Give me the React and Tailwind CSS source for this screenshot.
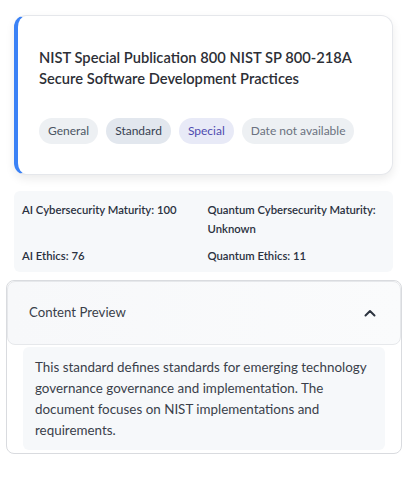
import React from "react";

function Badge({ children, cls }) {
  return (
    <span className={`inline-flex h-[26px] items-center rounded-full px-[9px] text-[12px] ${cls}`}>
      {children}
    </span>
  );
}

export default function App() {
  return (
    <div className="h-[479px] w-[416px] bg-white px-[6px] pt-[15px] font-[Lato,sans-serif]">
      <div className="ml-[8px] w-[379px] rounded-[12px] border border-[#e5e7eb] border-l-[4px] border-l-[#3b82f6] bg-white pb-[30px] pl-[21px] pr-[20px] pt-[31px] shadow-[0_4px_10px_rgba(0,0,0,0.08)]">
        <h2 className="text-[14.7px] font-semibold leading-[21px] text-[#2d2f36]">
          NIST Special Publication 800 NIST SP 800-218A Secure Software Development Practices
        </h2>
        <div className="mt-[29px] flex gap-2">
          <Badge cls="bg-[#edf0f3] text-[#4b5563]">General</Badge>
          <Badge cls="bg-[#e2e7ee] text-[#374151]">Standard</Badge>
          <Badge cls="bg-[#e8eaf7] text-[#4f4bb0]">Special</Badge>
          <Badge cls="bg-[#edf0f3] text-[#6b7280]">Date not available</Badge>
        </div>
      </div>

      <div className="ml-[8px] mt-[16px] grid w-[379px] grid-cols-2 gap-2 rounded-[6px] bg-[#f6f8fa] px-2 pb-[7px] pt-[9px] text-[11.3px] font-semibold leading-[19px] text-[#2a3140]">
        <div>AI Cybersecurity Maturity: 100</div>
        <div>Quantum Cybersecurity Maturity: Unknown</div>
        <div>AI Ethics: 76</div>
        <div>Quantum Ethics: 11</div>
      </div>

      <div className="mt-[8px] w-[396px] rounded-[8px] border border-[#d9dbdf] pb-[3px]">
        <div className="flex h-[64px] items-center justify-between rounded-[8px] border border-[#e6e8eb] bg-gradient-to-r from-[#f7f8fa] to-[#fafbfc] pl-[21px] pr-[24px]">
          <span className="text-[13.2px] text-[#3a3f4a]">Content Preview</span>
          <svg width="12" height="8" viewBox="0 0 12 8" fill="none">
            <path d="M1.5 6.5 L6 2 L10.5 6.5" stroke="#2d3440" strokeWidth="2" strokeLinecap="round" strokeLinejoin="round" />
          </svg>
        </div>
        <div className="mx-4 mt-[2px] rounded-[6px] bg-[#f6f8fa] px-[12px] pb-[9px] pt-[10px] text-[13.4px] leading-[21px] text-[#3a3f4a]">
          This standard defines standards for emerging technology governance governance and implementation. The document focuses on NIST implementations and requirements.
        </div>
      </div>
    </div>
  );
}
